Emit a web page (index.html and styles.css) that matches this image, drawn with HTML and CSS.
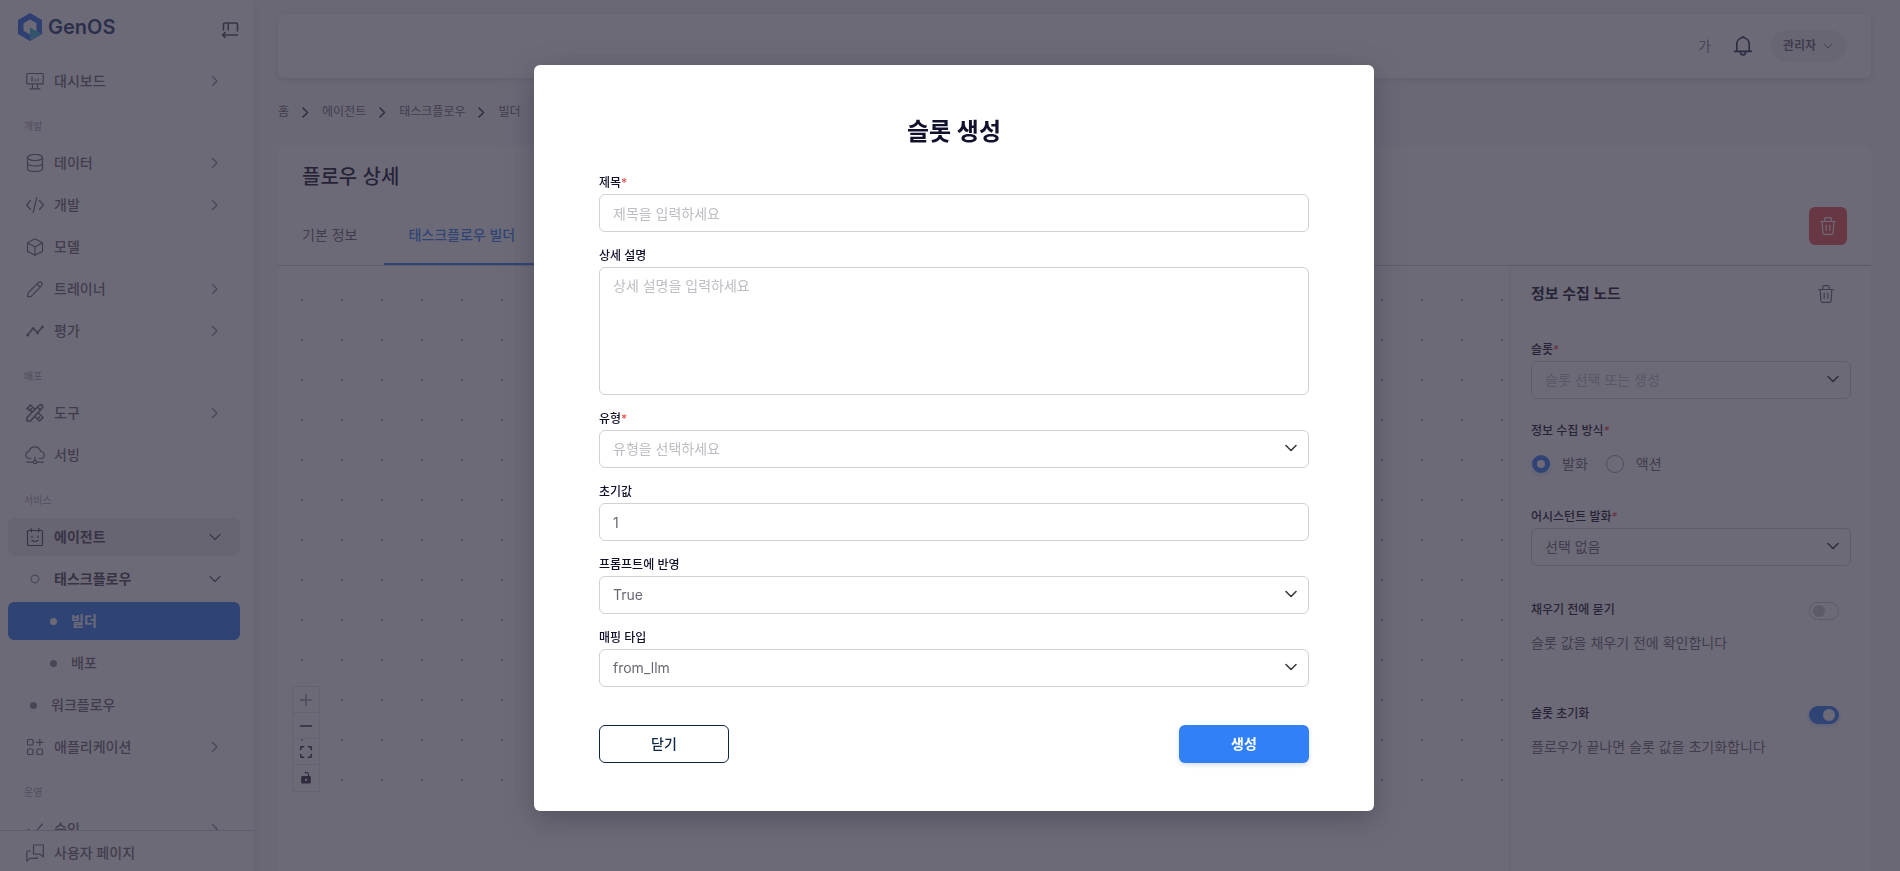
FILE: index.html
```html
<!DOCTYPE html>
<html lang="ko">
<head>
<meta charset="utf-8">
<title>GenOS - 플로우 상세</title>
<link rel="stylesheet" href="styles.css">
</head>
<body>
<svg class="sprite" aria-hidden="true">
  <symbol id="right" viewBox="0 0 18 18"><path d="M6.500 4.500l4.500 4.500-4.500 4.500"/></symbol>
  <symbol id="down" viewBox="0 0 18 18"><path d="M4 6.500l5 5 5-5"/></symbol>
  <symbol id="trash" viewBox="0 0 20 20"><path d="M2.500 5.500h15M6.800 5.200V2.600c0-.6.4-1 1-1h4.400c.6 0 1 .4 1 1v2.600M4.200 5.500l.6 11.300c.1.900.6 1.500 1.500 1.500h7.400c.9 0 1.400-.6 1.500-1.500l.6-11.300M8.200 9v5.500M11.800 9v5.500"/></symbol>
</svg>
<div class="app">
  <aside class="sidebar">
    <div class="brand">
      <a class="logo" href="#">
        <svg width="24" height="28" viewBox="0 0 24 28"><path fill="#2f6fed" fill-rule="evenodd" d="M12 0l12 7v14l-12 7L0 21V7zM12 6.500l-6.500 3.700v7.600l6.500 3.700 6.500-3.700v-7.600z"/><path fill="#3fb9d8" d="M12 14.500l11 6L12 27.500z"/></svg>
        <span>GenOS</span>
      </a>
      <button class="icon-button" type="button" aria-label="메뉴 접기">
        <svg class="ico bold" width="18" height="18" viewBox="0 0 18 18"><path d="M2.500 9V3.500c0-.8.5-1.500 1.500-1.500h11c1 0 1.500.7 1.500 1.500V10M7.200 2.200V9M16.500 14H1.800M4.200 11.500L1.600 14l2.600 2.500"/></svg>
      </button>
    </div>
    <nav class="menu">
      <a class="item" href="#"><svg class="ico" width="18" height="18" viewBox="0 0 18 18"><path d="M1.500 1.500h15c.3 0 .7.300.7.700v9c0 .4-.4.700-.7.700h-15c-.3 0-.7-.3-.7-.7v-9c0-.4.4-.7.7-.7zM6 5v4M9 7.500V9M12 6.500V9M6.500 12v4.500M11.500 12v4.500M4 16.800h10"/></svg><span>대시보드</span><svg class="ico arrow" width="18" height="18"><use href="#right"/></svg></a>
      <h2 class="section">개발</h2>
      <a class="item" href="#"><svg class="ico" width="18" height="18" viewBox="0 0 18 18"><ellipse cx="9" cy="3.500" rx="7.500" ry="3"/><path d="M1.500 3.500v11c0 1.700 3 3 7.500 3s7.500-1.300 7.500-3v-11M1.500 9c0 1.700 3 3 7.500 3s7.500-1.300 7.500-3"/></svg><span>데이터</span><svg class="ico arrow" width="18" height="18"><use href="#right"/></svg></a>
      <a class="item" href="#"><svg class="ico" width="18" height="18" viewBox="0 0 18 18"><path d="M4.500 4.500L.6 9l3.900 4.500M13.500 4.500L17.400 9l-3.900 4.500M10.800 1.500L7.200 16.500"/></svg><span>개발</span><svg class="ico arrow" width="18" height="18"><use href="#right"/></svg></a>
      <a class="item" href="#"><svg class="ico" width="18" height="18" viewBox="0 0 18 18"><path d="M9 .8l7.500 4v8.600L9 17.300l-7.500-3.900V4.800zM1.500 4.800L9 9l7.500-4.200M9 9v8.300"/></svg><span>모델</span></a>
      <a class="item" href="#"><svg class="ico" width="18" height="18" viewBox="0 0 18 18"><path d="M1.500 17l.5-4L12.200 2.700c1-1 2.400-1.100 3.300-.2s.8 2.300-.2 3.300L5.200 16.300zM11 4l3 3"/></svg><span>트레이너</span><svg class="ico arrow" width="18" height="18"><use href="#right"/></svg></a>
      <a class="item" href="#"><svg class="ico bold" width="18" height="18" viewBox="0 0 18 18"><path d="M1.500 13L7 6.500l4.500 4L16.500 5"/><g class="solid"><circle cx="1.800" cy="13" r="1.500"/><circle cx="7" cy="6.500" r="1.500"/><circle cx="11.500" cy="10.800" r="1.500"/><circle cx="16.300" cy="5" r="1.500"/></g></svg><span>평가</span><svg class="ico arrow" width="18" height="18"><use href="#right"/></svg></a>
      <h2 class="section">배포</h2>
      <a class="item" href="#"><svg class="ico bold" width="18" height="18" viewBox="0 0 18 18"><path d="M1 17v-3.500L13 1.500c1-1 2.200-1 3-.2s.8 2-.2 3L4.500 17zM6.500 8L1 4.500 4.500 1 9 5.500M12.500 9L17 13.500 13.500 17 9 12.500M4 6l1.500-1.500M12 14.500l1.500-1.500M11.500 3l3.200 3.200"/></svg><span>도구</span><svg class="ico arrow" width="18" height="18"><use href="#right"/></svg></a>
      <a class="item" href="#"><svg class="ico" width="20" height="18" viewBox="0 0 20 18"><path d="M6 12.500H4.500C2.400 12.500.8 11 .8 9s1.300-3.300 3.200-3.600C4.800 2.400 7 .8 9.800.8c3 0 5.300 2 5.800 4.700 2.100.1 3.600 1.600 3.600 3.500 0 2-1.500 3.500-3.600 3.500H14M10 11v3M1.500 16.200h6.700M11.800 16.200h6.700"/><circle cx="10" cy="16" r="1.600"/></svg><span>서빙</span></a>
      <h2 class="section">서비스</h2>
      <a class="item open shaded" href="#"><svg class="ico" width="18" height="18" viewBox="0 0 18 18"><path d="M2.500 2.500h13c.6 0 1 .4 1 1v13c0 .6-.4 1-1 1h-13c-.6 0-1-.4-1-1v-13c0-.6.400-1 1-1zM5 0l.5 4M13 0l-.5 4M6 8v1.500M12 8v1.500M6 12.500c1.500 1.300 4.500 1.300 6 0"/></svg><span>에이전트</span><svg class="ico arrow" width="18" height="18"><use href="#down"/></svg></a>
      <a class="item open" href="#"><svg class="ico faint" width="18" height="18" viewBox="0 0 18 18"><circle cx="9" cy="9" r="3.800"/></svg><span>태스크플로우</span><svg class="ico arrow" width="18" height="18"><use href="#down"/></svg></a>
      <a class="item deep active" href="#"><i class="bullet"></i><span>빌더</span></a>
      <a class="item deep" href="#"><i class="bullet"></i><span>배포</span></a>
      <a class="item mid" href="#"><i class="bullet"></i><span>워크플로우</span></a>
      <a class="item" href="#"><svg class="ico" width="18" height="18" viewBox="0 0 18 18"><rect x="1.500" y="1.500" width="5.500" height="5.500" rx="1"/><rect x="1.500" y="11" width="5.500" height="5.500" rx="1"/><rect x="11" y="11" width="5.500" height="5.500" rx="1"/><path d="M13.800 1v6.500M10.500 4.300H17"/></svg><span>애플리케이션</span><svg class="ico arrow" width="18" height="18"><use href="#right"/></svg></a>
      <h2 class="section">운영</h2>
      <a class="item" href="#"><svg class="ico" width="18" height="18" viewBox="0 0 18 18"><path d="M2.500 9.500L7 14.500 16.500 4"/></svg><span>승인</span><svg class="ico arrow" width="18" height="18"><use href="#right"/></svg></a>
    </nav>
    <div class="foot">
      <a class="item" href="#"><svg class="ico" width="18" height="18" viewBox="0 0 18 18"><path d="M8 1h9c.2 0 .4.2.4.400V13l-3-2.800H8c-.3 0-.5-.2-.5-.5V1.500c0-.3.2-.5.5-.5zM4.500 7H1.200c-.2 0-.4.200-.4.400v9.800l3-2.800h7c.2 0 .4-.2.4-.4v-1"/></svg><span>사용자 페이지</span></a>
    </div>
  </aside>

  <main class="main">
    <header class="topbar">
      <button class="lang" type="button">가</button>
      <button class="icon-button bell" type="button" aria-label="알림"><svg class="ico bold" width="20" height="22" viewBox="0 0 20 22"><path d="M3.800 16V9.500C3.800 5.500 6.500 3.300 8.700 3c0-1.700 2.600-1.700 2.600 0 2.200.3 4.900 2.500 4.900 6.500V16M1.500 16.400h17M7.300 17c0 3.800 5.400 3.800 5.400 0"/></svg></button>
      <button class="user" type="button">관리자<svg class="ico" width="14" height="14"><use href="#down"/></svg></button>
    </header>
    <nav class="crumbs" aria-label="경로">
      <a href="#">홈</a><svg class="ico" width="9" height="12" viewBox="0 0 9 12"><path d="M2 2l4.500 4.500L2 11"/></svg>
      <a href="#">에이전트</a><svg class="ico" width="9" height="12" viewBox="0 0 9 12"><path d="M2 2l4.500 4.500L2 11"/></svg>
      <a href="#">태스크플로우</a><svg class="ico" width="9" height="12" viewBox="0 0 9 12"><path d="M2 2l4.500 4.500L2 11"/></svg>
      <a href="#">빌더</a><svg class="ico" width="9" height="12" viewBox="0 0 9 12"><path d="M2 2l4.500 4.500L2 11"/></svg>
    </nav>
    <section class="card">
      <div class="card-head">
        <div class="card-left">
          <h1>플로우 상세</h1>
          <div class="tabs">
            <a class="tab" href="#">기본 정보</a>
            <a class="tab current" href="#">태스크플로우 빌더</a>
          </div>
        </div>
        <button class="delete" type="button" aria-label="플로우 삭제"><svg class="ico" width="20" height="20"><use href="#trash"/></svg></button>
      </div>
      <div class="card-body">
        <div class="canvas">
          <div class="controls">
            <button type="button" aria-label="확대" disabled><svg class="ico bold" width="12" height="12" viewBox="0 0 12 12"><path d="M0 6h12M6 0v12"/></svg></button>
            <button type="button" aria-label="축소"><svg class="ico bold" width="12" height="12" viewBox="0 0 12 12"><path d="M0 6h12"/></svg></button>
            <button type="button" aria-label="맞춤"><svg class="ico bold" width="12" height="12" viewBox="0 0 12 12"><path d="M.7 3.500V2c0-.8.5-1.300 1.300-1.300h1.500M8.500.7H10c.8 0 1.300.5 1.300 1.300v1.500M11.300 8.500V10c0 .8-.5 1.300-1.300 1.300H8.500M3.500 11.300H2c-.8 0-1.300-.5-1.300-1.300V8.500"/></svg></button>
            <button type="button" aria-label="잠금"><svg class="ico" width="12" height="12" viewBox="0 0 12 12"><path class="solid" fill-rule="evenodd" d="M2.200 4h7.600c.6 0 1 .4 1 1v5.500c0 .6-.4 1-1 1H2.200c-.6 0-1-.4-1-1V5c0-.6.400-1 1-1zM5 6.800v2h2v-2z"/><path d="M5 .8c2-.8 3.500.2 3.500 2V4"/></svg></button>
          </div>
        </div>
        <div class="panel">
          <div class="panel-head">
            <h2>정보 수집 노드</h2>
            <button class="icon-button" type="button" aria-label="노드 삭제"><svg class="ico" width="20" height="20"><use href="#trash"/></svg></button>
          </div>
          <div class="field slot">
            <label for="slot">슬롯<b>*</b></label>
            <div class="select"><select id="slot" class="empty"><option>슬롯 선택 또는 생성</option></select><svg class="ico" width="18" height="18"><use href="#down"/></svg></div>
          </div>
          <fieldset class="methods">
            <legend>정보 수집 방식<b>*</b></legend>
            <label><input type="radio" name="method" checked>발화</label>
            <label><input type="radio" name="method">액션</label>
          </fieldset>
          <div class="field">
            <label for="speech">어시스턴트 발화<b>*</b></label>
            <div class="select"><select id="speech"><option>선택 없음</option></select><svg class="ico" width="18" height="18"><use href="#down"/></svg></div>
          </div>
          <div class="option">
            <div class="option-row"><label for="ask">채우기 전에 묻기</label><input id="ask" class="switch" type="checkbox"></div>
            <p>슬롯 값을 채우기 전에 확인합니다</p>
          </div>
          <div class="option">
            <div class="option-row"><label for="reset">슬롯 초기화</label><input id="reset" class="switch" type="checkbox" checked></div>
            <p>플로우가 끝나면 슬롯 값을 초기화합니다</p>
          </div>
        </div>
      </div>
    </section>
  </main>
</div>

<div class="overlay">
  <form class="modal" role="dialog" aria-modal="true" aria-labelledby="modal-title">
    <h2 id="modal-title">슬롯 생성</h2>
    <div class="fields">
      <div class="field"><label for="title">제목<b>*</b></label><input id="title" type="text" placeholder="제목을 입력하세요"></div>
      <div class="field"><label for="desc">상세 설명</label><textarea id="desc" placeholder="상세 설명을 입력하세요"></textarea></div>
      <div class="field"><label for="type">유형<b>*</b></label><div class="select"><select id="type" class="empty"><option>유형을 선택하세요</option></select><svg class="ico" width="18" height="18"><use href="#down"/></svg></div></div>
      <div class="field"><label for="initial">초기값</label><input id="initial" type="text" value="1"></div>
      <div class="field"><label for="prompt">프롬프트에 반영</label><div class="select"><select id="prompt"><option>True</option></select><svg class="ico" width="18" height="18"><use href="#down"/></svg></div></div>
      <div class="field"><label for="mapping">매핑 타입</label><div class="select"><select id="mapping"><option>from_llm</option></select><svg class="ico" width="18" height="18"><use href="#down"/></svg></div></div>
    </div>
    <div class="actions">
      <button class="btn outline" type="button">닫기</button>
      <button class="btn primary" type="button">생성</button>
    </div>
  </form>
</div>
</body>
</html>
```
FILE: styles.css
```css
* { box-sizing: border-box; }

:root {
  --blue: #3081f7;
  --ink: #11112d;
  --text: #6a6773;
  --line: #d1d1d4;
}

body {
  margin: 0;
  height: 100vh;
  overflow: hidden;
  background: #f8f7fa;
  color: var(--text);
  font: 14px/22px Inter, "Noto Sans CJK KR", sans-serif;
}

h1, h2, p { margin: 0; }
a { color: inherit; text-decoration: none; }
button, input, select, textarea { font: inherit; color: inherit; }
button { padding: 0; border: 0; background: none; }
.sprite { display: none; }

.ico {
  flex: none;
  fill: none;
  stroke: currentColor;
  stroke-width: 1.2;
  stroke-linecap: round;
  stroke-linejoin: round;
}
.ico.bold { stroke-width: 1.6; }
.solid { fill: currentColor; stroke: none; }
.icon-button { display: flex; }

.app { display: flex; height: 100%; }

/* sidebar */
.sidebar {
  display: flex;
  flex-direction: column;
  flex: none;
  width: 254px;
  background: #fff;
  box-shadow: 0 2px 8px rgba(47, 43, 61, .1);
}
.brand {
  display: flex;
  justify-content: space-between;
  flex: none;
  height: 62px;
  padding: 13px 15px 0 18px;
}
.brand .icon-button { padding-top: 8px; height: 26px; color: #4b4858; }
.logo {
  display: flex;
  align-items: center;
  gap: 6px;
  height: 28px;
  color: #1e3a70;
  font-size: 20px;
  font-weight: 600;
}
.menu {
  display: flex;
  flex: 1;
  flex-direction: column;
  gap: 4px;
  min-height: 0;
  padding: 0 14px 0 8px;
  overflow: hidden;
}
.item {
  display: flex;
  align-items: center;
  flex: none;
  gap: 10px;
  height: 38px;
  padding: 0 16px 0 18px;
  border-radius: 6px;
  font-weight: 500;
}
.item > .ico:first-child { width: 20px; margin-left: -1px; margin-right: -1px; }
.item span { flex: 1; }
.item .arrow { color: #85828f; }
.item.open { color: #4b4858; font-weight: 700; }
.item.open .arrow { color: #5a5766; }
.item .faint { color: #85828f; }
.item.shaded { background: #efeef0; }
.item.deep { padding-left: 42px; gap: 14px; }
.item.mid { padding-left: 22px; gap: 14px; }
.item.active { background: var(--blue); color: #fff; font-weight: 700; }
.bullet { width: 7px; height: 7px; border-radius: 50%; background: #85828f; }
.active .bullet { background: #fff; }
.section {
  flex: none;
  height: 36px;
  padding: 8px 16px 0;
  color: #a09eaa;
  font-size: 10px;
  font-weight: 400;
  line-height: 28px;
}
.foot {
  flex: none;
  padding: 4px 8px 0;
  border-top: 1px solid #d0cfd5;
}
.foot .item { height: 36px; }

/* main column */
.main {
  display: flex;
  flex: 1;
  flex-direction: column;
  min-width: 0;
  padding: 14px 29px 0 24px;
}
.topbar {
  display: flex;
  align-items: center;
  justify-content: flex-end;
  flex: none;
  height: 64px;
  padding: 0 24px;
  border-radius: 6px;
  background: #fff;
  box-shadow: 0 2px 6px rgba(47, 43, 61, .14);
}
.bell { margin: 0 18px 0 22px; color: #1c2c54; }
.lang { color: #85828f; }
.user {
  display: flex;
  align-items: center;
  gap: 5px;
  height: 32px;
  padding: 0 12px;
  border-radius: 16px;
  background: #f1f0f2;
  font-size: 12px;
  font-weight: 700;
}
.crumbs {
  display: flex;
  align-items: center;
  flex: none;
  gap: 12px;
  height: 68px;
  font-size: 12px;
}
.crumbs .ico { color: #3a3748; stroke-width: 1.6; }

.card {
  display: flex;
  flex: 1;
  flex-direction: column;
  border-radius: 6px 6px 0 0;
  background: #fff;
}
.card-head {
  display: flex;
  align-items: flex-end;
  justify-content: space-between;
  flex: none;
  height: 120px;
  padding-right: 24px;
  border-bottom: 1px solid #d0cfd5;
}
.card-left { display: flex; flex-direction: column; }
.card-left h1 {
  padding-left: 24px;
  color: var(--ink);
  font-size: 20px;
  font-weight: 500;
  line-height: 30px;
}
.tabs { display: flex; gap: 3px; margin-top: 12px; }
.tab {
  height: 61px;
  padding: 0 24px;
  line-height: 62px;
}
.tab.current {
  border-bottom: 2px solid var(--blue);
  color: var(--blue);
  font-weight: 500;
}
.delete {
  display: flex;
  align-items: center;
  justify-content: center;
  width: 38px;
  height: 38px;
  margin-bottom: 20px;
  border-radius: 6px;
  background: #ea5455;
  color: #fff;
}
.card-body { display: flex; flex: 1; }
.canvas {
  display: flex;
  align-items: flex-end;
  flex: 1;
  height: 541px;
  padding: 15px 14px;
  background: radial-gradient(circle, #a3a1ab 1px, transparent 1px) 4px 14px / 40px 40px;
}
.controls {
  display: flex;
  flex-direction: column;
  border: 1px solid #e6e5ea;
}
.controls button {
  display: flex;
  align-items: center;
  justify-content: center;
  width: 26px;
  height: 26px;
  border-bottom: 1px solid #e6e5ea;
  color: #2f2b3d;
}
.controls button:last-child { border-bottom: 0; }
.controls button:disabled { color: #9a98a3; }

/* node settings */
.panel {
  width: 360px;
  padding: 17px 20px 0;
  background: #fff;
  box-shadow: -1px 0 4px rgba(47, 43, 61, .14);
}
.panel-head {
  display: flex;
  align-items: center;
  justify-content: space-between;
  padding-right: 15px;
}
.panel-head h2 {
  color: var(--ink);
  font-size: 15px;
  font-weight: 700;
}
.slot { margin-top: 37px; }
.methods {
  display: flex;
  gap: 17px;
  margin: 24px 0 34px;
  padding: 0;
  border: 0;
}
.methods legend { padding: 0; margin-bottom: 14px; }
.methods label { display: flex; align-items: center; gap: 12px; }
.methods input {
  appearance: none;
  width: 18px;
  height: 18px;
  margin: 0 0 0 1px;
  border: 1px solid #9c9aa5;
  border-radius: 50%;
}
.methods input:checked {
  border: 5px solid var(--blue);
  box-shadow: 0 2px 4px rgba(48, 129, 247, .3);
}
.option { margin-top: 34px; }
.option + .option { margin-top: 50px; }
.option-row {
  display: flex;
  align-items: center;
  justify-content: space-between;
  padding-right: 12px;
}
.option p { margin-top: 12px; }
.switch {
  appearance: none;
  display: flex;
  align-items: center;
  width: 30px;
  height: 18px;
  margin: 2px 0 0;
  padding: 0 3px;
  border: 1px solid #cccbd1;
  border-radius: 9px;
}
.switch::before {
  content: "";
  width: 12px;
  height: 12px;
  border-radius: 50%;
  background: #cccbd1;
}
.switch:checked {
  justify-content: flex-end;
  border-color: var(--blue);
  background: var(--blue);
  box-shadow: 0 2px 4px rgba(48, 129, 247, .3);
}
.switch:checked::before { background: #fff; }

/* form fields */
.field { display: flex; flex-direction: column; gap: 3px; }
.field > label, .methods legend, .option-row label {
  color: var(--ink);
  font-size: 12px;
  font-weight: 500;
  line-height: 16px;
}
.field b, .methods b { color: #ea5455; font-weight: 500; }
.field input, .field textarea, .select select {
  width: 100%;
  height: 38px;
  padding: 0 13px;
  border: 1px solid var(--line);
  border-radius: 6px;
  background: none;
}
.field textarea { display: block; height: 128px; padding: 7px 13px; resize: none; }
.field ::placeholder, .select .empty { color: #bebdc3; opacity: 1; }
.select { position: relative; }
.select select { appearance: none; }
.select .ico {
  position: absolute;
  top: 9px;
  right: 9px;
  color: #3b3b3f;
  stroke-width: 1.6;
  pointer-events: none;
}

/* modal */
.overlay {
  position: fixed;
  inset: 0;
  display: flex;
  align-items: center;
  justify-content: center;
  padding: 5px 0 0 8px;
  background: rgba(47, 43, 61, .7);
}
.modal {
  width: 840px;
  padding: 48px 65px;
  border-radius: 6px;
  background: #fff;
  box-shadow: 0 8px 28px rgba(47, 43, 61, .4);
}
.modal h2 {
  color: var(--ink);
  font-size: 24px;
  font-weight: 700;
  line-height: 38px;
  text-align: center;
}
.fields {
  display: flex;
  flex-direction: column;
  gap: 16px;
  margin: 24px 0 38px;
}
.actions { display: flex; justify-content: space-between; }
.btn {
  width: 130px;
  height: 38px;
  border-radius: 6px;
  font-weight: 500;
}
.outline { border: 1px solid #0e2744; color: #0e2744; }
.primary {
  background: var(--blue);
  box-shadow: 0 2px 4px rgba(47, 43, 61, .16);
  color: #fff;
  font-weight: 700;
}
```
